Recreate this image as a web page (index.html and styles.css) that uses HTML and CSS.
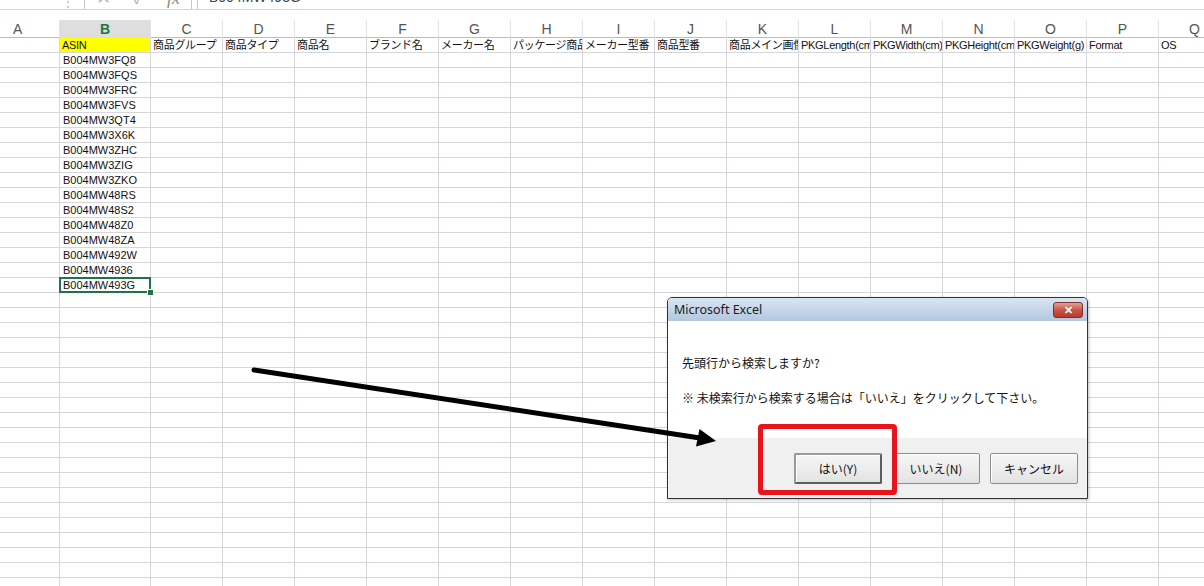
FILE: index.html
```html
<!DOCTYPE html>
<html lang="ja">
<head>
    <meta charset="UTF-8">
    <meta name="viewport" content="width=device-width, initial-scale=1.0">
    <title>Excel - 検索</title>
    <link rel="stylesheet" href="styles.css">
</head>
<body>
    <div class="formula-bar">
        <span class="fb-dots">⋮</span>
        <div class="fb-tools">
            <span>✕</span>
            <span>✓</span>
            <span class="fx">fx</span>
        </div>
        <div class="fb-input">B004MW493G</div>
    </div>
    <div class="col-heads" id="heads"></div>
    <div class="sheet" id="sheet"></div>

    <div class="dialog">
        <div class="dlg-title">
            <span>Microsoft Excel</span>
            <span class="dlg-close">✕</span>
        </div>
        <div class="dlg-body">
            <p>先頭行から検索しますか?</p>
            <p>※ 未検索行から検索する場合は「いいえ」をクリックして下さい。</p>
        </div>
        <div class="dlg-foot">
            <button class="btn default">はい(Y)</button>
            <button class="btn">いいえ(N)</button>
            <button class="btn">キャンセル</button>
        </div>
    </div>

    <svg class="arrow" width="1204" height="586" viewBox="0 0 1204 586">
        <line x1="254" y1="370" x2="700" y2="438" stroke="#000" stroke-width="5" stroke-linecap="round"/>
        <polygon points="716,441 696,446.5 699.5,429" fill="#000"/>
    </svg>
    <div class="callout"></div>

    <script>
        const cols = 'ABCDEFGHIJKLMNOPQ'.split('');
        const header = ['', 'ASIN', '商品グループ', '商品タイプ', '商品名', 'ブランド名', 'メーカー名',
            'パッケージ商品名', 'メーカー型番', '商品型番', '商品メイン画像', 'PKGLength(cm)',
            'PKGWidth(cm)', 'PKGHeight(cm)', 'PKGWeight(g)', 'Format', 'OS'];
        const asins = ['B004MW3FQ8', 'B004MW3FQS', 'B004MW3FRC', 'B004MW3FVS', 'B004MW3QT4',
            'B004MW3X6K', 'B004MW3ZHC', 'B004MW3ZIG', 'B004MW3ZKO', 'B004MW48RS', 'B004MW48S2',
            'B004MW48Z0', 'B004MW48ZA', 'B004MW492W', 'B004MW4936', 'B004MW493G'];

        const heads = document.getElementById('heads');
        cols.forEach((c) => {
            const h = document.createElement('div');
            h.className = 'col-head' + (c === 'B' ? ' active' : '');
            h.textContent = c;
            heads.appendChild(h);
        });

        const sheet = document.getElementById('sheet');
        for (let r = 0; r < 37; r++) {
            cols.forEach((c, i) => {
                const cell = document.createElement('div');
                cell.className = 'cell';
                if (r === 0) {
                    cell.textContent = header[i];
                    cell.classList.add('title-row');
                } else if (i === 1 && asins[r - 1]) {
                    cell.textContent = asins[r - 1];
                }
                if (r === 0 && i === 1) cell.classList.add('highlight');
                if (r === 16 && i === 1) cell.classList.add('selected');
                sheet.appendChild(cell);
            });
        }
    </script>
</body>
</html>
```

FILE: styles.css
```css
body {
    margin: 0;
    padding: 0;
    width: 1204px;
    height: 586px;
    overflow: hidden;
    position: relative;
    background: #fff;
    font-family: "Liberation Sans", "Noto Sans CJK JP", sans-serif;
}

/* 数式バー（上が切れている） */
.formula-bar {
    height: 9px;
    border-bottom: 1px solid #d5d5d5;
    margin-bottom: 10px;
    display: flex;
    align-items: flex-end;
    overflow: hidden;
    color: #b8b8b8;
}
.fb-dots {
    width: 16px;
    margin-left: 62px;
    font-size: 12px;
    line-height: 14px;
}
.fb-tools {
    width: 106px;
    height: 9px;
    margin-left: 6px;
    border-left: 1px solid #c8c8c8;
    border-right: 1px solid #c8c8c8;
    display: flex;
    align-items: flex-end;
    justify-content: space-around;
    font-size: 18px;
    line-height: 22px;
}
.fb-tools .fx {
    font-family: "Liberation Serif", serif;
    font-style: italic;
    color: #8a8a8a;
}
.fb-input {
    flex: 1;
    height: 9px;
    margin-left: 5px;
    padding-left: 11px;
    border-left: 1px solid #c8c8c8;
    font-size: 14px;
    line-height: 24px;
    color: #444;
    display: flex;
    align-items: flex-end;
}

/* 列見出し */
.col-heads,
.sheet {
    display: grid;
    grid-template-columns: 60px 91px repeat(15, 72px);
}
.col-heads {
    height: 18px;
    border-bottom: 1px solid #bdbdbd;
    box-sizing: border-box;
}
.col-head {
    border-right: 1px solid #e2e2e2;
    text-align: center;
    font-size: 14px;
    line-height: 18px;
    color: #555;
}
.col-head:first-child {
    text-align: left;
    padding-left: 13px;
}
.col-head.active {
    background: #dedede;
    color: #217346;
    font-weight: bold;
}

/* セル */
.sheet {
    grid-auto-rows: 15px;
}
.cell {
    box-sizing: border-box;
    border-right: 1px solid #d6d6de;
    border-bottom: 1px solid #d6d6de;
    padding: 0 1px 0 3px;
    font-size: 11px;
    line-height: 15px;
    color: #111;
    white-space: nowrap;
    overflow: hidden;
}
.cell.title-row {
    padding-left: 2px;
    letter-spacing: -0.3px;
}
.cell.highlight {
    background: #ffff00;
}
.cell.selected {
    position: relative;
    overflow: visible;
    z-index: 1;
}
.cell.selected::before {
    content: "";
    position: absolute;
    left: -1px;
    top: -1px;
    right: -1px;
    bottom: -1px;
    border: 2px solid #217346;
}
.cell.selected::after {
    content: "";
    position: absolute;
    right: -4px;
    bottom: -4px;
    width: 5px;
    height: 5px;
    background: #217346;
    border: 1px solid #fff;
}

/* ダイアログ */
.dialog {
    position: absolute;
    left: 667px;
    top: 297px;
    width: 421px;
    height: 202px;
    box-sizing: border-box;
    border: 1px solid #333;
    border-radius: 5px 5px 0 0;
    background: #fff;
    display: flex;
    flex-direction: column;
    box-shadow: 1px 1px 3px rgba(0, 0, 0, 0.25);
    z-index: 2;
}
.dlg-title {
    height: 23px;
    display: flex;
    align-items: center;
    justify-content: space-between;
    padding: 0 4px 0 6px;
    background: linear-gradient(#dae5f2, #b3c7df);
    border-radius: 4px 4px 0 0;
    font-family: "Noto Sans", sans-serif;
    font-size: 12.5px;
    color: #1a1a1a;
}
.dlg-close {
    width: 30px;
    height: 16px;
    box-sizing: border-box;
    border: 1px solid #7d3029;
    border-radius: 3px;
    background: linear-gradient(#e4a095, #c9564a 50%, #b8392d);
    color: #fff;
    font-weight: bold;
    font-size: 11px;
    line-height: 14px;
    text-align: center;
}
.dlg-body {
    flex: 1;
    padding: 33px 14px 0;
    font-family: "Noto Sans CJK JP", sans-serif;
    font-size: 12px;
    color: #111;
}
.dlg-body p {
    margin: 0 0 17px;
    line-height: 18px;
}
.dlg-foot {
    height: 60px;
    box-sizing: border-box;
    background: #f0f0f0;
    display: flex;
    justify-content: flex-end;
    align-items: flex-start;
    gap: 10px;
    padding: 15px 9px 0 0;
}
.btn {
    width: 88px;
    height: 31px;
    border: 1px solid #8c8c8c;
    border-radius: 2px;
    background: linear-gradient(#f6f6f6, #e3e3e3);
    font-family: "Noto Sans CJK JP", sans-serif;
    font-size: 12px;
    color: #111;
    box-shadow: inset 1px 1px 0 #fff;
}
.btn.default {
    border: 2px solid #5e5e5e;
    border-top-color: #9a9a9a;
    border-left-color: #9a9a9a;
}

/* 注釈 */
.arrow {
    position: absolute;
    left: 0;
    top: 0;
    z-index: 3;
    pointer-events: none;
}
.callout {
    position: absolute;
    left: 758px;
    top: 424px;
    width: 139px;
    height: 71px;
    box-sizing: border-box;
    border: 5px solid #e8131b;
    border-radius: 4px;
    z-index: 3;
}
```
